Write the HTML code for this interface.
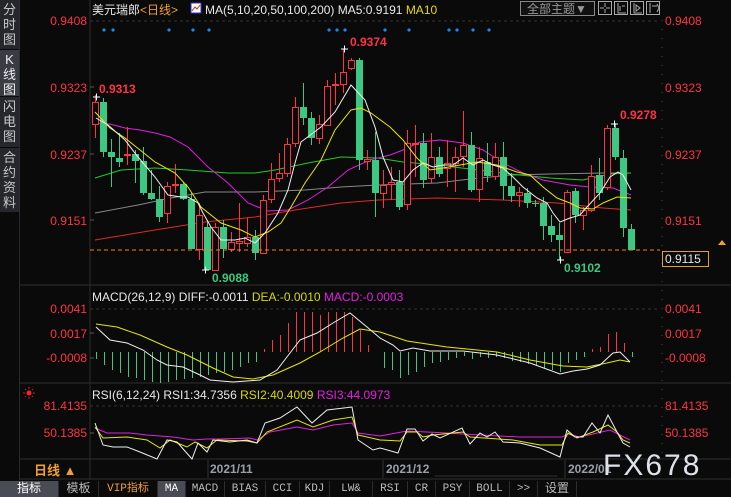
<!DOCTYPE html>
<html><head><meta charset="utf-8"><style>
*{margin:0;padding:0;box-sizing:border-box}
body{width:731px;height:497px;background:#0a0a0a;overflow:hidden;position:relative;font-family:"Liberation Sans","Noto Sans CJK SC",sans-serif}
.side{position:absolute;left:0;top:0;width:20px;height:480px;background:#0a0a0a;border-right:1px solid #2c2c30}
.side div{position:absolute;left:0;width:19px;background:#26272c;color:#c8c8c8;font-size:13px;line-height:15px;text-align:center;border-bottom:1px solid #0a0a0a;padding-top:2px}
.tb{position:absolute;left:0;top:481px;height:16px;width:731px;background:#0a0a0a}
.tb span{position:absolute;top:0;height:16px;line-height:16px;text-align:center;font-size:11px;color:#bbb;border-right:1px solid #2c2c30;font-family:"Liberation Mono","Noto Sans CJK SC",monospace;white-space:nowrap;overflow:hidden}
svg{position:absolute;left:0;top:0}
</style></head><body>
<div class="side">
<div style="top:0;height:50px">分<br>时<br>图</div>
<div style="top:50px;height:47px;background:#3a3c44;color:#eee">K<br>线<br>图</div>
<div style="top:97px;height:51px">闪<br>电<br>图</div>
<div style="top:148px;height:65px">合<br>约<br>资<br>料</div>
</div>
<svg width="731" height="497" viewBox="0 0 731 497" font-family="Liberation Sans, Noto Sans CJK SC, sans-serif">
<g stroke="#2e2e2e">
<line x1="90" y1="0" x2="90" y2="480"/>
<line x1="20" y1="285" x2="731" y2="285"/>
<line x1="20" y1="383" x2="731" y2="383"/>
<line x1="20" y1="459" x2="731" y2="459"/>
<line x1="20" y1="479" x2="731" y2="479"/>
</g>
<line x1="662" y1="20" x2="662" y2="459" stroke="#444" stroke-dasharray="1,8"/>
<g stroke="#333" stroke-dasharray="3,3">
<line x1="90" y1="21" x2="660" y2="21"/>
<line x1="90" y1="309" x2="660" y2="309"/>
<line x1="90" y1="406" x2="660" y2="406"/>
</g>
<text x="92" y="14" font-size="12" fill="#e8e8e8">美元瑞郎<tspan fill="#f0a030">&lt;日线&gt;</tspan></text>
<rect x="191" y="3" width="10" height="10" fill="#fff" stroke="#33c"/>
<polyline points="192,11 195,7 197,9 200,5" fill="none" stroke="#d22"/>
<text x="205" y="14" font-size="12" fill="#e8e8e8">MA(5,10,20,50,100,200)  MA5:0.9191  <tspan fill="#e8d800">MA10</tspan></text>
<rect x="520.5" y="1.5" width="74" height="14" fill="#111" stroke="#888"/>
<text x="527" y="13" font-size="12" fill="#999">全部主题▼</text>
<g fill="none" stroke="#aaa">
<rect x="598.5" y="1.5" width="13" height="13"/><rect x="614.5" y="1.5" width="13" height="13"/><rect x="630.5" y="1.5" width="13" height="13"/><rect x="646.5" y="1.5" width="13" height="13"/>
<path d="M605 3v4M605 9v4M600 8h4M606 8h4M618 3v10h8M620 6v5M622 6h3M634 3v10h8M636 5v6l4-3z M650 3v10M652 6h5M657 4l2 4-2 4"/>
</g>
<g font-size="12" fill="#ff3344">
<text x="87" y="25" text-anchor="end">0.9408</text>
<text x="87" y="92" text-anchor="end">0.9323</text>
<text x="87" y="159" text-anchor="end">0.9237</text>
<text x="87" y="225" text-anchor="end">0.9151</text>
<text x="665" y="25">0.9408</text>
<text x="665" y="92">0.9323</text>
<text x="665" y="159">0.9237</text>
<text x="665" y="225">0.9151</text>
<text x="87" y="313" text-anchor="end">0.0041</text>
<text x="87" y="338" text-anchor="end">0.0017</text>
<text x="87" y="362" text-anchor="end">-0.0008</text>
<text x="665" y="313">0.0041</text>
<text x="665" y="338">0.0017</text>
<text x="665" y="362">-0.0008</text>
<text x="87" y="410" text-anchor="end">81.4135</text>
<text x="87" y="437" text-anchor="end">50.1385</text>
<text x="665" y="410">81.4135</text>
<text x="665" y="437">50.1385</text>
</g>
<g stroke="#555"><line x1="90" y1="87" x2="94" y2="87"/><line x1="90" y1="154" x2="94" y2="154"/><line x1="90" y1="220" x2="94" y2="220"/><line x1="90" y1="333" x2="94" y2="333"/><line x1="90" y1="358" x2="94" y2="358"/><line x1="90" y1="433" x2="94" y2="433"/></g>
<g fill="#1e88e5"><circle cx="104" cy="30" r="1.6"/><circle cx="113" cy="30" r="1.6"/><circle cx="169" cy="30" r="1.6"/><circle cx="193" cy="30" r="1.6"/><circle cx="209" cy="30" r="1.6"/><circle cx="329" cy="30" r="1.6"/><circle cx="337" cy="30" r="1.6"/><circle cx="345" cy="30" r="1.6"/><circle cx="385" cy="30" r="1.6"/><circle cx="409" cy="30" r="1.6"/><circle cx="449" cy="30" r="1.6"/><circle cx="457" cy="30" r="1.6"/><circle cx="473" cy="30" r="1.6"/><circle cx="489" cy="30" r="1.6"/></g>
<g fill="none" stroke-width="1">
<polyline stroke="#e02828" points="95,240 155,230 205,222 255,217 295,210 341,203 378,200 437,198 503,200 557,203 603,208 631,210"/>
<polyline stroke="#888" points="95,213 138,205 171,198 205,192 255,192 305,190 341,187 378,185 437,183 470,179 510,175 550,174 603,173 631,173"/>
<polyline stroke="#22cc22" points="95,178 121,170 155,168 188,170 228,173 255,173 275,170 308,163 341,157 378,158 403,162 437,165 470,169 510,174 550,178 583,180 610,174 631,173"/>
<polyline stroke="#e020e0" points="95,123 110,124 125,128 140,130 155,133 170,137 188,147 208,167 228,183 248,203 268,211 288,210 308,200 328,187 348,170 370,160 390,155 403,150 420,142 440,140 463,143 483,150 503,163 523,173 543,180 570,185 590,187 613,188 631,195"/>
</g>
<g id="c"></g>
<g fill="none">
<polyline stroke="#e8e800" points="95,112 110,128 125,138 140,150 155,162 175,173 188,187 201,207 221,223 241,230 255,237 268,232 281,223 291,207 305,183 321,160 335,130 351,110 361,108 371,113 390,127 403,140 417,158 430,170 443,168 460,165 477,162 497,165 517,172 530,175 543,187 557,198 570,203 580,208 593,209 603,203 617,197 631,198"/>
<polyline stroke="#f0f0f0" points="96,118 108,125 125,140 138,157 155,177 168,195 181,197 188,197 198,203 203,213 211,227 221,240 235,240 245,238 255,243 265,233 278,213 288,190 295,163 301,142 321,127 335,112 351,85 365,100 375,127 383,157 393,180 403,182 413,170 423,163 433,167 443,165 453,165 463,158 473,165 483,160 493,165 503,168 513,177 523,187 537,198 547,203 553,213 560,222 570,218 580,215 587,207 600,193 610,177 618,172 623,175 631,190"/>
</g>
<line x1="90" y1="250" x2="660" y2="250" stroke="#f08020" stroke-dasharray="4,3"/>
<rect x="662.5" y="251.5" width="46" height="15" fill="#0a0a0a" stroke="#e8a020"/>
<text x="665" y="263" font-size="12" fill="#e8e8e8">0.9115</text>
<path d="M718 245l4-5 4 5z" fill="#f0a030"/>
<g stroke="#fff"><path d="M93 97h7M96.5 93.5v7M341 49h7M344.5 45.5v7M202 270h7M205.5 266.5v7M557 260h7M560.5 256.5v7M611 124h7M614.5 120.5v7"/></g>
<g font-size="12" font-weight="bold">
<text x="99" y="93" fill="#ff3344">0.9313</text>
<text x="350" y="46" fill="#ff3344">0.9374</text>
<text x="620" y="119" fill="#ff3344">0.9278</text>
<text x="212" y="282" fill="#3cc882">0.9088</text>
<text x="564" y="272" fill="#3cc882">0.9102</text>
</g>
<text x="92" y="301" font-size="12" fill="#e8e8e8">MACD(26,12,9) DIFF:-0.0011  <tspan fill="#d8d800">DEA:-0.0010</tspan>  <tspan fill="#e020e0">MACD:-0.0003</tspan></text>
<g stroke="#3cc882" id="mg"></g>
<g stroke="#ff3344" id="mr"></g>
<polyline fill="none" stroke="#e8e800" points="96,324 117,327 140,335 167,347 187,355 213,368 233,377 253,379 273,375 300,363 320,352 343,338 360,329 380,332 407,341 447,347 497,352 530,360 563,366 587,367 607,363 620,360 630,362"/>
<polyline fill="none" stroke="#f0f0f0" points="96,327 110,340 127,343 143,350 157,360 167,365 183,367 200,375 210,380 233,382 260,380 277,370 290,353 300,340 317,333 333,323 350,313 367,327 380,338 393,345 400,351 413,348 430,351 463,351 497,355 530,363 560,374 573,371 587,369 600,365 613,353 620,352 630,362"/>
<circle cx="29" cy="393" r="2.5" fill="#ff2020"/>
<g stroke="#ff2020" stroke-width="0.8"><path d="M29 387v2M29 397v2M23 393h2M33 393h2M25 389l1 1M32 396l1 1M25 397l1-1M32 390l1-1"/></g>
<text x="92" y="399" font-size="12" fill="#e8e8e8">RSI(6,12,24) RSI1:34.7356  <tspan fill="#d8d800">RSI2:40.4009</tspan>  <tspan fill="#e020e0">RSI3:44.0973</tspan></text>
<g fill="none">
<polyline stroke="#e020e0" points="95,428 107,433 130,433 147,435 173,437 193,440 207,439 220,439 250,438 257,440 270,432 297,427 313,430 333,425 352,423 358,433 380,436 407,431 447,433 480,435 520,437 562,437 568,434 580,437 593,434 610,430 620,435 630,440"/>
<polyline stroke="#e8e800" points="95,427 103,438 127,437 147,440 160,448 170,440 187,447 195,442 207,448 217,440 247,441 257,443 267,432 297,420 313,427 333,420 352,417 358,435 380,440 400,441 407,432 417,432 423,437 433,435 463,432 470,437 513,440 540,445 562,445 568,433 577,438 593,432 608,425 617,432 623,440 630,443"/>
<polyline stroke="#f0f0f0" points="95,423 103,445 113,447 127,447 140,452 157,459 167,440 177,442 192,459 198,443 207,452 213,440 230,442 247,440 257,443 265,423 280,418 297,407 312,423 327,410 352,407 358,440 373,450 380,448 398,453 407,429 415,429 423,441 432,434 440,438 462,428 470,444 480,433 487,437 495,432 503,442 520,443 540,448 560,457 567,430 575,437 583,437 592,423 600,433 608,415 617,432 623,443 630,447"/>
</g>
<g stroke="#333"><line x1="208" y1="460" x2="208" y2="478"/><line x1="383" y1="460" x2="383" y2="478"/><line x1="565" y1="460" x2="565" y2="478"/><line x1="435" y1="476" x2="557" y2="476"/></g>
<text x="34" y="475" font-size="13" font-weight="bold" fill="#f0a030">日线 ▲</text>
<g font-size="12" font-weight="bold" fill="#9aa0a8">
<text x="210" y="473">2021/11</text><text x="386" y="473">2021/12</text><text x="568" y="473">2022/01</text>
</g>
<text x="603" y="475" font-size="30" fill="#dde2ea" letter-spacing="2">FX678</text>
</svg>
<div class="tb">
<span style="left:0;width:59px;background:#4a4c55;color:#fff;font-size:12px">指标</span>
<span style="left:59px;width:40px;font-size:12px">模板</span>
<span style="left:99px;width:59px;color:#f0a030">VIP指标</span>
<span style="left:158px;width:28px;background:#4a4c55;color:#fff">MA</span>
<span style="left:186px;width:39px">MACD</span>
<span style="left:225px;width:41px">BIAS</span>
<span style="left:266px;width:34px">CCI</span>
<span style="left:300px;width:30px">KDJ</span>
<span style="left:330px;width:43px">LW&amp;</span>
<span style="left:373px;width:35px">RSI</span>
<span style="left:408px;width:28px">CR</span>
<span style="left:436px;width:34px">PSY</span>
<span style="left:470px;width:40px">BOLL</span>
<span style="left:510px;width:28px">&gt;&gt;</span>
<span style="left:538px;width:39px;font-size:12px">设置</span>
</div>
<script>
var d=[[102,124,95,138,'r'],[102,152,98,157,'g'],[152,157,139,187,'g'],[158,162,133,167,'g'],[154,155,127,165,'r'],[154,161,150,183,'g'],[161,193,147,195,'g'],[193,199,170,200,'g'],[199,217,186,222,'g'],[186,213,182,223,'r'],[184,185,164,193,'r'],[184,199,182,200,'g'],[199,249,193,249,'g'],[215,249,203,260,'r'],[227,270,220,270,'g'],[227,270,223,270,'r'],[227,249,220,258,'g'],[242,249,232,252,'r'],[241,243,203,252,'r'],[237,243,218,247,'r'],[237,253,230,260,'g'],[200,253,195,253,'r'],[179,199,163,203,'r'],[173,178,153,182,'r'],[144,173,138,177,'r'],[107,143,97,147,'r'],[107,118,83,125,'g'],[118,138,112,145,'g'],[124,138,115,144,'r'],[86,125,80,125,'r'],[84,85,73,105,'r'],[72,84,49,93,'r'],[60,68,58,70,'r'],[60,160,58,170,'g'],[159,161,150,170,'r'],[160,193,132,217,'g'],[185,193,170,208,'r'],[182,184,167,200,'r'],[182,207,170,210,'g'],[143,204,130,210,'r'],[143,144,125,177,'r'],[143,180,133,188,'g'],[157,178,133,183,'r'],[157,174,147,177,'g'],[163,168,140,187,'r'],[157,163,147,192,'r'],[145,156,111,167,'r'],[145,190,132,192,'g'],[158,189,147,202,'r'],[162,176,143,182,'g'],[157,176,143,180,'r'],[157,186,142,200,'g'],[186,196,173,202,'g'],[192,195,187,207,'r'],[193,203,188,208,'g'],[203,204,200,207,'g'],[203,226,197,240,'g'],[226,235,215,242,'g'],[235,240,223,260,'g'],[192,252,190,253,'r'],[191,215,188,223,'g'],[210,215,207,230,'r'],[176,210,165,212,'r'],[175,193,158,200,'g'],[128,187,125,190,'r'],[128,157,123,160,'g'],[158,228,150,237,'g'],[229,250,224,250,'g']];
var s='';d.forEach(function(c,i){var x=95+8*i,col=c[4]=='r'?'#ff3344':'#3cc882';s+='<line x1="'+(x+.5)+'" y1="'+c[2]+'" x2="'+(x+.5)+'" y2="'+c[3]+'" stroke="'+col+'"/>';var h=Math.max(c[1]-c[0],1);if(c[4]=='r')s+='<rect x="'+(x-2.5)+'" y="'+(c[0]+.5)+'" width="6" height="'+h+'" fill="#0a0a0a" stroke="'+col+'"/>';else s+='<rect x="'+(x-3)+'" y="'+c[0]+'" width="7" height="'+h+'" fill="'+col+'"/>';});
document.getElementById('c').innerHTML=s;
var g=[359,365,370,373,377,378,380,382,383,382,380,379,378,377,375,373,372,370,367,363,362,0,0,0,0,0,0,0,0,0,0,0,0,0,0,0,368,370,378,375,372,367,363,362,360,358,356,359,357,358,357,358,361,362,364,366,368,370,372,363,360,357,0,0,0,0,0,357];
var r={21:349,22:340,23:335,24:323,25:312,26:312,27:312,28:315,29:312,30:312,31:312,32:317,33:330,34:345,62:349,63:347,64:334,65:332,66:343};
var a='',b='';g.forEach(function(v,i){var x=96+8*i+.5;if(v)a+='<line x1="'+x+'" y1="352" x2="'+x+'" y2="'+v+'"/>';});
for(var k in r){var x=96+8*k+.5;b+='<line x1="'+x+'" y1="352" x2="'+x+'" y2="'+r[k]+'"/>';}
document.getElementById('mg').innerHTML=a;document.getElementById('mr').innerHTML=b;
</script>
</body></html>
